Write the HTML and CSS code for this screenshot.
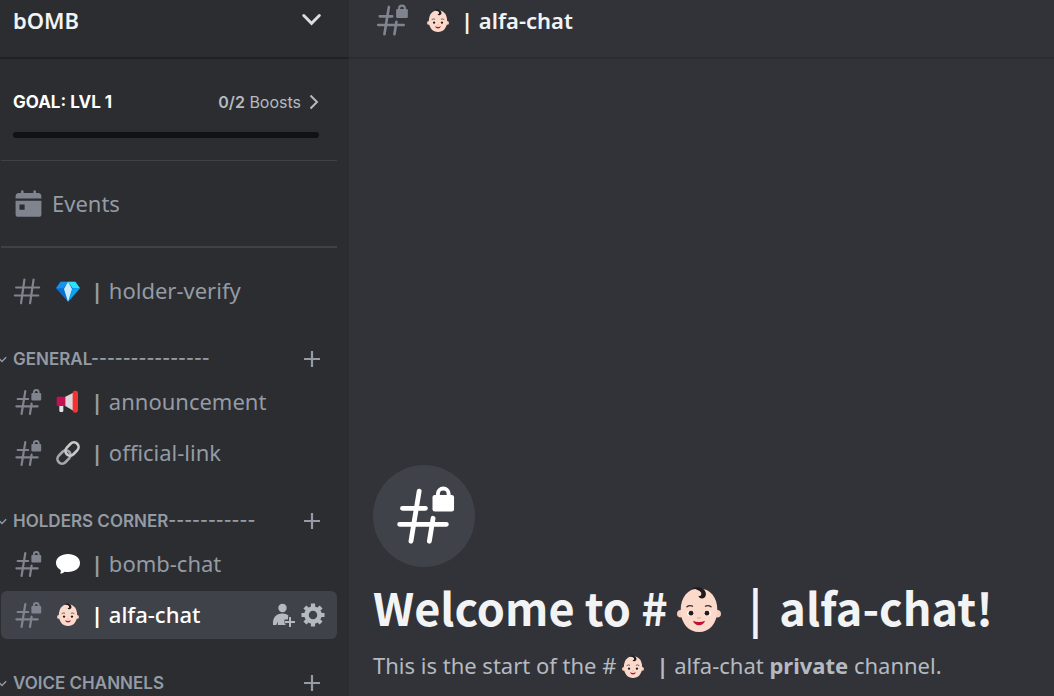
FILE: index.html
```html
<!DOCTYPE html>
<html lang="en">
<head>
  <meta charset="UTF-8">
  <meta name="viewport" content="width=device-width, initial-scale=1.0">
  <title>alfa-chat | bOMB</title>
  <link rel="stylesheet" href="styles.css">
</head>
<body>
  <!-- Shared icons -->
  <svg class="sprite" aria-hidden="true">
    <symbol id="hash" viewBox="0 0 24 24">
      <path d="M3.2 8.9H21M2.2 15.1H20.3M9.6 2.8L7 21.1M16.7 2.8L14 21.1" fill="none" stroke="currentColor" stroke-width="1.7" stroke-linecap="round"/>
    </symbol>
    <symbol id="hash-lock" viewBox="0 0 24 24">
      <path d="M4.4 9.3H12.5M3.4 14.95H19.9M10.3 3.2L7.4 20.9M15.2 12.8L13.9 20.9" fill="none" stroke="currentColor" stroke-width="1.7" stroke-linecap="round"/>
      <path d="M16.900 5.500V4.200a1.900 1.900 0 0 1 3.800 0V5.500" fill="none" stroke="currentColor" stroke-width="1.400"/>
      <rect x="15" y="4.600" width="7.600" height="5.800" rx="0.800" fill="currentColor"/>
    </symbol>
    <symbol id="plus" viewBox="0 0 18 18">
      <path d="M9 1V17M1 9H17" stroke="currentColor" stroke-width="2.200"/>
    </symbol>
    <symbol id="arrow" viewBox="0 0 12 12">
      <path d="M1 4L6 9L11 4" fill="none" stroke="currentColor" stroke-width="1.600"/>
    </symbol>
    <symbol id="baby" viewBox="-1 -1 38 38">
      <circle cx="3.600" cy="21" r="3" fill="#f9cfc0"/>
      <circle cx="32.400" cy="21" r="3" fill="#f9cfc0"/>
      <path d="M18 1C9 1 3.500 8 3.500 18C3.500 29 10 35.500 18 35.500S32.500 29 32.500 18C32.500 8 27 1 18 1Z" fill="#fcdacb"/>
      <path d="M12.500 .8C17-1.200 23.500 .5 23.500 5.500C23.500 9.500 18 9.800 17.500 6.800C19 7.500 20.500 6 19.500 4C18.500 2.200 16 1.800 12.500 .8Z" fill="#1f1b1c"/>
      <path d="M8.500 15.500Q10.500 13.800 12.800 15M23.200 15Q25.500 13.800 27.500 15.500" fill="none" stroke="#3a2a25" stroke-width="1.100" stroke-linecap="round"/>
      <ellipse cx="11.300" cy="20.500" rx="2.800" ry="2" fill="#fff"/>
      <ellipse cx="24.700" cy="20.500" rx="2.800" ry="2" fill="#fff"/>
      <circle cx="11.700" cy="20.500" r="1.900" fill="#2b1714"/>
      <circle cx="24.300" cy="20.500" r="1.900" fill="#2b1714"/>
      <path d="M16.500 24Q18 25 19.500 24" fill="none" stroke="#eaa591" stroke-width="1"/>
      <path d="M13.200 26.500Q18 28.500 22.800 26.500Q21.500 30 18 30T13.200 26.500Z" fill="#bd1231"/>
    </symbol>
  </svg>

  <div class="app">
    <aside class="sidebar">
      <button class="server-header">
        <span>bOMB</span>
        <svg class="server-arrow" viewBox="0 0 18 18"><path d="M2.500 5L9.500 12L16.500 5" fill="none" stroke="currentColor" stroke-width="2.600" stroke-linecap="round"/></svg>
      </button>

      <div class="boost">
        <div class="boost-row">
          <span class="boost-goal">GOAL: LVL 1</span>
          <a class="boost-count" href="#boosts"><span><b>0/2</b> Boosts</span>
            <svg class="boost-arrow" viewBox="0 0 10 16"><path d="M1.500 1.500L8 8L1.500 14.500" fill="none" stroke="currentColor" stroke-width="2"/></svg>
          </a>
        </div>
        <div class="boost-bar"></div>
      </div>

      <hr class="divider">
      <a class="channel events" href="#events">
        <svg class="channel-icon" viewBox="0 0 24 24">
          <path d="M2 6C2 4 2.800 3 4.500 3H6.200V1.900A1 1 0 0 1 8.200 1.900V3H15.800V1.900A1 1 0 0 1 17.800 1.900V3H19.500C21.200 3 22 4 22 6V7.300H2Z" fill="currentColor"/>
          <path fill-rule="evenodd" d="M2 9H22V19.500A2 2 0 0 1 20 21.500H4A2 2 0 0 1 2 19.500ZM5 12V16H9V12Z" fill="currentColor"/>
        </svg>
        <span class="channel-name"><span>Events</span></span>
      </a>
      <hr class="divider thick">

      <ul class="channel-list">
        <li class="channel-row">
          <a class="channel" href="#holder-verify">
            <svg class="channel-icon"><use href="#hash"/></svg>
            <span class="channel-name">
              <svg class="emoji" viewBox="0 0 36 36">
                <path d="M7 4H29L36 14L18 34L0 14Z" fill="#0a6fd0"/>
                <path d="M7 4L0 14H11L18 4Z" fill="#1693ea"/>
                <path d="M18 4H29L36 14H25Z" fill="#2fe0fa"/>
                <path d="M25 14H36L18 34Z" fill="#0aa5ee"/>
                <path d="M18 4L12 15L18 34L24 15Z" fill="#c9edff"/>
              </svg>
              <span><span class="bar">|</span> holder-verify</span>
            </span>
          </a>
        </li>
      </ul>

      <div class="category">
        <button class="category-name"><svg class="category-arrow"><use href="#arrow"/></svg>GENERAL---------------</button>
        <button class="category-add" aria-label="Create channel"><svg><use href="#plus"/></svg></button>
      </div>
      <ul class="channel-list">
        <li class="channel-row">
          <a class="channel" href="#announcement">
            <svg class="channel-icon"><use href="#hash-lock"/></svg>
            <span class="channel-name">
              <svg class="emoji" viewBox="0 0 36 36">
                <path d="M5 22H11V31Q11 33 9 33H7Q5 33 5 31Z" fill="#e4e2e6"/>
                <path d="M3 10H14V24H3Q1 24 1 22V12Q1 10 3 10Z" fill="#c4124f"/>
                <path d="M14 10L26 4V31L14 24Z" fill="#d9d7dc"/>
                <rect x="25" y="1" width="8" height="33" rx="3.500" fill="#f8312f"/>
              </svg>
              <span><span class="bar">|</span> announcement</span>
            </span>
          </a>
        </li>
        <li class="channel-row">
          <a class="channel" href="#official-link">
            <svg class="channel-icon"><use href="#hash-lock"/></svg>
            <span class="channel-name">
              <svg class="emoji" viewBox="0 0 36 36">
                <g fill="none" stroke-width="4">
                  <rect x="1" y="17" width="22" height="14" rx="7" transform="rotate(-45 12 24)" stroke="#a6a6a6"/>
                  <rect x="13" y="5" width="22" height="14" rx="7" transform="rotate(-45 24 12)" stroke="#c9c9c9"/>
                </g>
              </svg>
              <span><span class="bar">|</span> official-link</span>
            </span>
          </a>
        </li>
      </ul>

      <div class="category">
        <button class="category-name"><svg class="category-arrow"><use href="#arrow"/></svg>HOLDERS CORNER-----------</button>
        <button class="category-add" aria-label="Create channel"><svg><use href="#plus"/></svg></button>
      </div>
      <ul class="channel-list">
        <li class="channel-row">
          <a class="channel" href="#bomb-chat">
            <svg class="channel-icon"><use href="#hash-lock"/></svg>
            <span class="channel-name">
              <svg class="emoji" viewBox="0 0 36 36">
                <path d="M18 3C28 3 36 8.500 36 16.500S28 30 18 30C16 30 14.500 29.800 13 29.500C11 31.500 8 32.500 6 32C7.500 30.500 7.500 28.500 6.800 27C2.500 24.500 0 21 0 16.500C0 8.500 8 3 18 3Z" fill="#fff"/>
              </svg>
              <span><span class="bar">|</span> bomb-chat</span>
            </span>
          </a>
        </li>
        <li class="channel-row selected">
          <a class="channel" href="#alfa-chat">
            <svg class="channel-icon"><use href="#hash-lock"/></svg>
            <span class="channel-name">
              <svg class="emoji"><use href="#baby"/></svg>
              <span><span class="bar">|</span> alfa-chat</span>
            </span>
          </a>
          <div class="channel-actions">
            <button aria-label="Create invite">
              <svg viewBox="0 0 24 24" fill="currentColor">
                <circle cx="11.500" cy="5" r="4.200"/>
                <path d="M2 22C1.500 14.500 5 10.500 11.500 10.500C14.500 10.500 16.500 11.400 17.900 13.200H17V16.500H13.500V20.500H14.500V22H6.800V18.500L5.300 22Z"/>
                <path d="M18 14H20V18H24V20H20V24H18V20H14V18H18Z"/>
              </svg>
            </button>
            <button aria-label="Edit channel">
              <svg viewBox="0 0 24 24">
                <circle cx="12" cy="12" r="6.500" fill="none" stroke="currentColor" stroke-width="4.500"/>
                <path d="M12 .5V4M12 20V23.500M.5 12H4M20 12H23.500M3.900 3.900L6.300 6.300M17.700 17.700L20.100 20.100M3.900 20.100L6.300 17.700M17.700 6.300L20.100 3.900" stroke="currentColor" stroke-width="4.200"/>
              </svg>
            </button>
          </div>
        </li>
      </ul>

      <div class="category">
        <button class="category-name"><svg class="category-arrow"><use href="#arrow"/></svg>VOICE CHANNELS</button>
        <button class="category-add" aria-label="Create channel"><svg><use href="#plus"/></svg></button>
      </div>
    </aside>

    <main class="chat">
      <header class="chat-header">
        <svg class="chat-icon"><use href="#hash-lock"/></svg>
        <h2 class="channel-name">
          <svg class="emoji"><use href="#baby"/></svg>
          <span><span class="bar">|</span> alfa-chat</span>
        </h2>
      </header>

      <section class="welcome">
        <div class="welcome-icon"><svg><use href="#hash-lock"/></svg></div>
        <h1>Welcome to #<svg class="emoji"><use href="#baby"/></svg><span class="bar">|</span> alfa-chat!</h1>
        <p>This is the start of the #<svg class="emoji"><use href="#baby"/></svg><span class="bar">|</span> alfa-chat <b>private</b> channel.</p>
      </section>
    </main>
  </div>
</body>
</html>
```
FILE: styles.css
```css
* {
  margin: 0;
  padding: 0;
  box-sizing: border-box;
}

body {
  font-family: "Noto Sans", sans-serif;
  font-size: 22px;
  line-height: 30px;
  background: #313338;
  color: #949ba4;
  overflow: hidden;
}

button {
  font: inherit;
  color: inherit;
  background: none;
  border: none;
  cursor: pointer;
}

a {
  color: inherit;
  text-decoration: none;
}

svg {
  display: block;
  flex-shrink: 0;
}

.sprite {
  display: none;
}

.app {
  display: flex;
  height: 100vh;
}

/* Sidebar */
.sidebar {
  width: 349px;
  flex-shrink: 0;
  background: #2b2d31;
  overflow: hidden;
}

.server-header {
  display: flex;
  justify-content: space-between;
  align-items: center;
  width: 100%;
  height: 59px;
  padding: 0 28px 18px 13px;
  border-bottom: 2px solid #1f2124;
  color: #f2f3f5;
  font-weight: 600;
}

.server-arrow {
  width: 20px;
  height: 20px;
  color: #dbdee1;
}

.boost {
  padding: 31px 30px 22px 13px;
}

.boost-row {
  display: flex;
  justify-content: space-between;
  align-items: center;
  font-family: Inter, sans-serif;
  font-size: 16px;
  line-height: 24px;
  margin-bottom: 18px;
}

.boost-goal {
  color: #fff;
  font-size: 17px;
  font-weight: 700;
}

.boost-count {
  display: flex;
  align-items: center;
  gap: 8px;
  color: #b5bac1;
}

.boost-count b {
  font-weight: 600;
}

.boost-arrow {
  width: 10px;
  height: 16px;
}

.boost-bar {
  height: 6px;
  border-radius: 3px;
  background: #111214;
}

.divider {
  height: 1px;
  margin: 0 12px 0 1px;
  border: none;
  background: #3f4147;
}

.divider.thick {
  height: 2px;
  margin-bottom: 19px;
}

.channel-list {
  display: flex;
  flex-direction: column;
  gap: 3px;
  list-style: none;
}

.channel-row {
  display: flex;
  margin: 0 12px 0 1px;
  border-radius: 6px;
}

.channel {
  flex: 1;
  display: flex;
  align-items: center;
  gap: 13px;
  height: 48px;
  padding-left: 11px;
}

.channel-icon {
  width: 31px;
  height: 31px;
  color: #80848e;
}

.channel-name {
  display: flex;
  align-items: center;
  gap: 11px;
}

.channel-name > span {
  padding-bottom: 2px;
}

.bar {
  font-weight: 700;
}

.emoji {
  width: 24px;
  height: 24px;
}

.events {
  gap: 8px;
  margin: 19px 0 18px;
  padding-left: 13px;
}

.selected {
  background: #404249;
  color: #fff;
}

.selected .channel-name {
  font-weight: 500;
}

.channel-actions {
  display: flex;
  align-items: center;
  gap: 6px;
  padding-right: 12px;
  color: #b5bac1;
}

.channel-actions svg {
  width: 24px;
  height: 24px;
}

.category {
  display: flex;
  justify-content: space-between;
  align-items: center;
  height: 38px;
  margin-top: 25px;
  padding-right: 28px;
  font-family: Inter, sans-serif;
  font-size: 17px;
  font-weight: 600;
}

.category-name {
  display: flex;
  align-items: center;
  gap: 6px;
}

.category-arrow {
  width: 10px;
  height: 10px;
  margin-left: -3px;
}

.category-add svg {
  width: 18px;
  height: 18px;
}

/* Chat */
.chat {
  flex: 1;
  display: flex;
  flex-direction: column;
  min-width: 0;
}

.chat-header {
  display: flex;
  align-items: center;
  gap: 16px;
  height: 59px;
  padding: 0 24px 16px;
  border-bottom: 2px solid #2a2c30;
  color: #f2f3f5;
}

.chat-header h2 {
  font-size: 22px;
  font-weight: 600;
}

.chat-icon {
  width: 37px;
  height: 37px;
  color: #80848e;
}

.welcome {
  margin-top: auto;
  padding: 0 24px 16px;
  color: #b5bac1;
}

.welcome-icon {
  display: flex;
  align-items: center;
  justify-content: center;
  width: 102px;
  height: 102px;
  border-radius: 50%;
  background: #404249;
  color: #fff;
}

.welcome-icon svg {
  width: 68px;
  height: 68px;
}

.welcome h1 {
  margin: 10px 0 13px;
  font-family: "Noto Sans CJK JP", sans-serif;
  font-size: 45px;
  line-height: 60px;
  color: #f2f3f5;
}

.welcome h1 .bar {
  margin: 0 7px;
}

.welcome .emoji {
  display: inline-block;
  vertical-align: -5px;
  margin: 0 11px 0 5px;
}

.welcome h1 .emoji {
  width: 48px;
  height: 48px;
  vertical-align: -8px;
  margin: 0 19px 0 7px;
}
```
